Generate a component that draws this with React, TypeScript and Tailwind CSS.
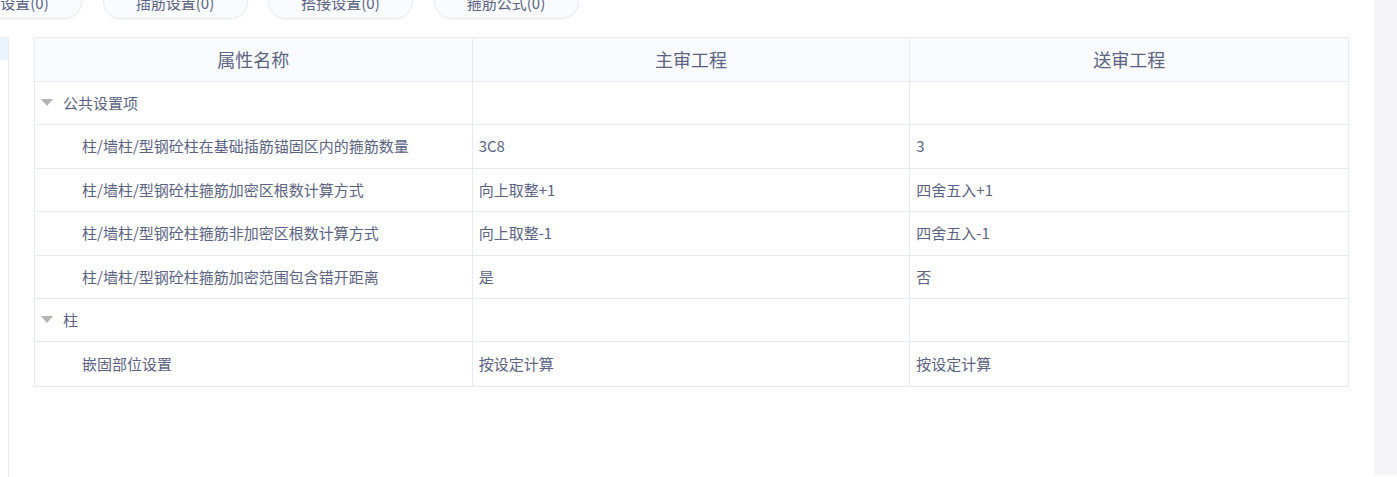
import React from 'react';

const TABS = ['锚固设置(0)', '插筋设置(0)', '搭接设置(0)', '箍筋公式(0)'];

type Row = { kind: 'group' | 'item'; name: string; main?: string; sent?: string };

const ROWS: Row[] = [
  { kind: 'group', name: '公共设置项' },
  { kind: 'item', name: '柱/墙柱/型钢砼柱在基础插筋锚固区内的箍筋数量', main: '3C8', sent: '3' },
  { kind: 'item', name: '柱/墙柱/型钢砼柱箍筋加密区根数计算方式', main: '向上取整+1', sent: '四舍五入+1' },
  { kind: 'item', name: '柱/墙柱/型钢砼柱箍筋非加密区根数计算方式', main: '向上取整-1', sent: '四舍五入-1' },
  { kind: 'item', name: '柱/墙柱/型钢砼柱箍筋加密范围包含错开距离', main: '是', sent: '否' },
  { kind: 'group', name: '柱' },
  { kind: 'item', name: '嵌固部位设置', main: '按设定计算', sent: '按设定计算' },
];

const font = { fontFamily: '"Noto Sans CJK SC", "Noto Sans", sans-serif' };

const App: React.FC = () => {
  return (
    <div className="w-[1397px] h-[477px] overflow-hidden bg-white flex text-[#5c6383]" style={font}>
      <div className="flex-1 flex flex-col">
        {/* tabs, page scrolled so their top is cut */}
        <div className="flex gap-[20.5px] -mt-[17px] -ml-[63px] h-[36px]">
          {TABS.map(t => (
            <div
              key={t}
              className="w-[145px] h-[36px] shrink-0 rounded-[18px] bg-[#f9fbfe] border border-[#e9ebf1] shadow-[0_1px_2px_rgba(0,0,0,0.04)] flex items-center justify-center pt-[4px] text-[15px] text-[#5c6383]"
            >
              {t}
            </div>
          ))}
        </div>

        <div className="flex flex-1 mt-[18px]">
          {/* left menu edge */}
          <div className="w-[9px] shrink-0 border-r border-[#e8ebf0]">
            <div className="h-[23px] bg-[#eaf4fd]" />
          </div>

          <div className="flex-1 pl-[25px] pr-[24px]">
            <div className="w-[1315px] border border-[#e8eaf2]">
              <div className="grid grid-cols-3 h-[44px] bg-[#f9fbfe] border-b border-[#e8eaf2] text-[18px]">
                <div className="flex items-center justify-center border-r border-[#e8eaf2]">属性名称</div>
                <div className="flex items-center justify-center border-r border-[#e8eaf2]">主审工程</div>
                <div className="flex items-center justify-center">送审工程</div>
              </div>
              {ROWS.map((r, i) => (
                <div
                  key={i}
                  className={`grid grid-cols-3 h-[43.4px] text-[15px] ${i < ROWS.length - 1 ? 'border-b border-[#e8eaf2]' : ''}`}
                >
                  <div className="flex items-center border-r border-[#e8eaf2]">
                    {r.kind === 'group' ? (
                      <>
                        <svg width="12" height="8" viewBox="0 0 12 8" className="ml-[6px] mr-[10px]">
                          <path d="M0 0 L12 0 L6 7 Z" fill="#b4b4b6" />
                        </svg>
                        <span>{r.name}</span>
                      </>
                    ) : (
                      <span className="pl-[47px]">{r.name}</span>
                    )}
                  </div>
                  <div className="flex items-center pl-[6px] border-r border-[#e8eaf2]">{r.main}</div>
                  <div className="flex items-center pl-[6px]">{r.sent}</div>
                </div>
              ))}
            </div>
          </div>
        </div>
      </div>

      {/* scrollbar track */}
      <div className="w-[23px] h-[475px] bg-[#f5f5f7] shrink-0" />
    </div>
  );
};

export default App;
